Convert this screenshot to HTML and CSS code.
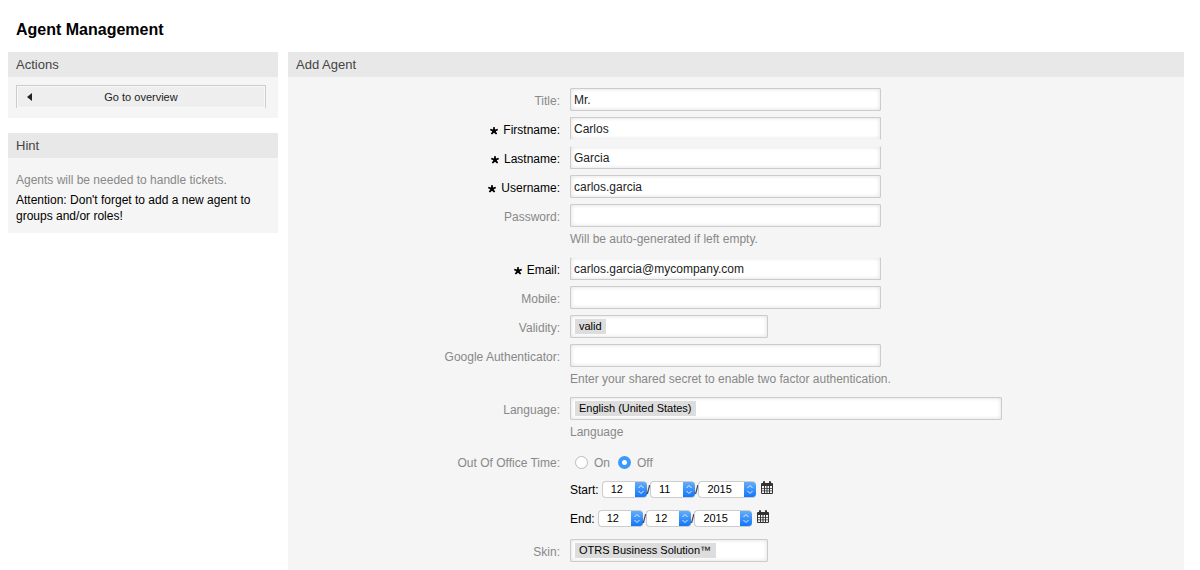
FILE: index.html
```html
<!DOCTYPE html>
<html lang="en">
<head>
<meta charset="utf-8">
<title>Agent Management</title>
<link rel="stylesheet" href="styles.css">
</head>
<body>
<svg class="defs" aria-hidden="true">
  <symbol id="star" viewBox="0 0 8 8"><path d="M3.300 0H4.700L5 2.400L7.500 1.800L8 3.200L5.700 4.300L7.200 6.700L6 7.600L4 5.800L2 7.600L.8 6.700L2.300 4.300L0 3.200L.5 1.800L3 2.400Z"/></symbol>
  <symbol id="calendar" viewBox="0 0 12 13"><path fill-rule="evenodd" d="M1 2H2V.5Q3 -.4 4 .5V2H8V.5Q9 -.4 10 .5V2H11Q12 2 12 3V12Q12 13 11 13H1Q0 13 0 12V3Q0 2 1 2ZM1 5V7H3V5ZM4 5V7H5.500V5ZM6.500 5V7H8V5ZM9 5V7H11V5ZM1 7.700V9.500H3V7.700ZM4 7.700V9.500H5.500V7.700ZM6.500 7.700V9.500H8V7.700ZM9 7.700V9.500H11V7.700ZM1 10.200V12H3V10.200ZM4 10.200V12H5.500V10.200ZM6.500 10.200V12H8V10.200ZM9 10.200V12H11V10.200Z"/></symbol>
</svg>
<h1 class="page-title">Agent Management</h1>
<div class="layout">
  <aside class="sidebar">
    <section class="widget">
      <h2 class="widget-header">Actions</h2>
      <div class="actions">
        <button type="button" class="overview"><svg class="caret" viewBox="0 0 5 8" aria-hidden="true"><path d="M5 0V8L0 4Z"/></svg><span class="overview-text">Go to overview</span></button>
      </div>
    </section>
    <section class="widget">
      <h2 class="widget-header">Hint</h2>
      <div class="hint">
        <p class="hint-info">Agents will be needed to handle tickets.</p>
        <p class="hint-warning">Attention: Don't forget to add a new agent to groups and/or roles!</p>
      </div>
    </section>
  </aside>
  <main class="widget content">
    <h2 class="widget-header">Add Agent</h2>
    <form class="form">
      <label class="label" for="title">Title:</label>
      <div><input class="field" id="title" type="text" value="Mr."></div>

      <label class="label required" for="firstname"><svg class="star" aria-hidden="true"><use href="#star"/></svg>Firstname:</label>
      <div><input class="field open-bottom" id="firstname" type="text" value="Carlos"></div>

      <label class="label required" for="lastname"><svg class="star" aria-hidden="true"><use href="#star"/></svg>Lastname:</label>
      <div><input class="field open-top" id="lastname" type="text" value="Garcia"></div>

      <label class="label required" for="username"><svg class="star" aria-hidden="true"><use href="#star"/></svg>Username:</label>
      <div><input class="field" id="username" type="text" value="carlos.garcia"></div>

      <label class="label" for="password">Password:</label>
      <div><input class="field" id="password" type="password"><p class="explain">Will be auto-generated if left empty.</p></div>

      <label class="label required" for="email"><svg class="star" aria-hidden="true"><use href="#star"/></svg>Email:</label>
      <div><input class="field open-top" id="email" type="text" value="carlos.garcia@mycompany.com"></div>

      <label class="label" for="mobile">Mobile:</label>
      <div><input class="field" id="mobile" type="text"></div>

      <label class="label" for="validity">Validity:</label>
      <div><div class="field choice"><select class="tag" id="validity"><option>valid</option></select></div></div>

      <label class="label" for="authenticator">Google Authenticator:</label>
      <div><input class="field" id="authenticator" type="text"><p class="explain">Enter your shared secret to enable two factor authentication.</p></div>

      <label class="label" for="language">Language:</label>
      <div><div class="field choice wide"><select class="tag" id="language"><option>English (United States)</option></select></div><p class="explain">Language</p></div>

      <span class="label" id="office">Out Of Office Time:</span>
      <div role="group" aria-labelledby="office">
        <div class="radios">
          <input class="radio" type="radio" name="office" id="on"><label for="on">On</label>
          <input class="radio" type="radio" name="office" id="off" checked><label for="off">Off</label>
        </div>
        <div class="date">
          <label class="date-label" for="start-month">Start:</label>
          <select class="part" id="start-month"><option>12</option></select><span>/</span><select class="part" aria-label="Start day"><option>11</option></select><span>/</span><select class="part year" aria-label="Start year"><option>2015</option></select>
          <button type="button" class="picker" aria-label="Pick start date"><svg class="calendar"><use href="#calendar"/></svg></button>
        </div>
        <div class="date">
          <label class="date-label" for="end-month">End:</label>
          <select class="part" id="end-month"><option>12</option></select><span>/</span><select class="part" aria-label="End day"><option>12</option></select><span>/</span><select class="part year" aria-label="End year"><option>2015</option></select>
          <button type="button" class="picker" aria-label="Pick end date"><svg class="calendar"><use href="#calendar"/></svg></button>
        </div>
      </div>

      <label class="label" for="skin">Skin:</label>
      <div><div class="field choice"><select class="tag" id="skin"><option>OTRS Business Solution™</option></select></div></div>
    </form>
  </main>
</div>
</body>
</html>
```
FILE: styles.css
```css
* { box-sizing: border-box; }

html { overflow: hidden; }

body {
  margin: 0;
  padding: 0 16px 0 8px;
  background: #fff;
  color: #000;
  font: 12px/16px "Liberation Sans", Arial, sans-serif;
}

h1, h2, p { margin: 0; }

input, select, button { font: inherit; color: inherit; }

.defs { display: none; }

.page-title {
  padding: 20px 8px 12px;
  font-size: 16px;
  line-height: 20px;
}

.layout {
  display: flex;
  gap: 10px;
}

.sidebar {
  flex: 0 0 270px;
  display: flex;
  flex-direction: column;
  gap: 15px;
}

.widget { background: #f5f5f5; }

.content { flex: 1; }

.widget-header {
  padding: 0 8px;
  background: #e8e8e8;
  color: #444;
  font-size: 13px;
  font-weight: normal;
  line-height: 25px;
}

.actions { padding: 8px 12px 10px 8px; }

.overview {
  display: flex;
  align-items: center;
  width: 100%;
  height: 23px;
  padding: 0 15px 0 10px;
  border: 1px solid #ccc;
  border-bottom: 0;
  background: #eee;
  box-shadow: inset 0 0 0 1px #f8f8f8;
  color: #222;
  font-size: 11px;
}

.caret {
  width: 5px;
  height: 8px;
  fill: #222;
}

.overview-text { flex: 1; }

.hint { padding: 14px 8px 9px; }

.hint-info {
  margin-bottom: 4px;
  color: #888;
}

.form {
  display: grid;
  grid-template-columns: 272px 1fr;
  column-gap: 10px;
  row-gap: 6px;
  padding: 11px 0 9px;
}

.label {
  padding-top: 6px;
  color: #888;
  line-height: 15px;
  text-align: right;
}

.required { color: #000; }

.star {
  width: 8px;
  height: 8px;
  margin-right: 5px;
  vertical-align: -1px;
}

.field {
  display: block;
  width: 311px;
  height: 23px;
  padding: 0 3px;
  border: 1px solid #ccc;
  border-radius: 1px;
  background: #fff;
  box-shadow: inset 0 0 4px #ddd;
  color: #222;
  font-size: 12px;
}

.open-top { border-top-color: #f5f5f5; }

.open-bottom { border-bottom-color: #f5f5f5; }

.choice {
  display: flex;
  align-items: center;
  width: 198px;
  padding: 0 4px;
}

.wide { width: 432px; }

.tag {
  appearance: none;
  height: 15px;
  padding: 0 4px;
  border: 0;
  border-radius: 0;
  background: #ddd;
  color: #000;
  font-size: 11px;
  line-height: 15px;
}

.explain {
  padding: 4px 0;
  color: #888;
}

.radios {
  display: flex;
  align-items: center;
  height: 25px;
  padding-left: 5px;
  color: #888;
}

.radio {
  appearance: none;
  width: 13px;
  height: 13px;
  margin: 0 6px 0 0;
  border: 1px solid #bbb;
  border-radius: 50%;
  background: #fff;
}

.radio:checked {
  border: 0;
  background: radial-gradient(circle, #fff 2px, #3b99fc 3px);
}

.radios label + .radio { margin-left: 8px; }

.date {
  display: flex;
  align-items: center;
  height: 29px;
}

.date-label { margin-right: 3px; }

.part {
  appearance: none;
  width: 45px;
  height: 17px;
  padding: 0 13px 0 8px;
  border: 1px solid #ccc;
  border-right: 0;
  border-radius: 4px;
  background: #fff url("data:image/svg+xml,%3Csvg xmlns='http://www.w3.org/2000/svg' width='12' height='17' viewBox='0 0 12 17'%3E%3Cdefs%3E%3ClinearGradient id='g' x2='0' y2='1'%3E%3Cstop stop-color='%2369b1fa'/%3E%3Cstop offset='1' stop-color='%230b73fb'/%3E%3C/linearGradient%3E%3C/defs%3E%3Cpath fill='url(%23g)' d='M0 0H12V17H0Z'/%3E%3Cpath fill='none' stroke='white' stroke-opacity='.85' d='M3.500 7L6 4.500L8.500 7M3.500 10L6 12.500L8.500 10'/%3E%3C/svg%3E") right center / 12px 17px no-repeat border-box;
  color: #000;
  font-size: 11px;
  line-height: 15px;
}

.year { width: 58px; }

.picker {
  display: flex;
  margin-left: 5px;
  padding: 0 0 4px;
  border: 0;
  background: none;
}

.calendar {
  width: 12px;
  height: 13px;
  fill: #333;
}
```
